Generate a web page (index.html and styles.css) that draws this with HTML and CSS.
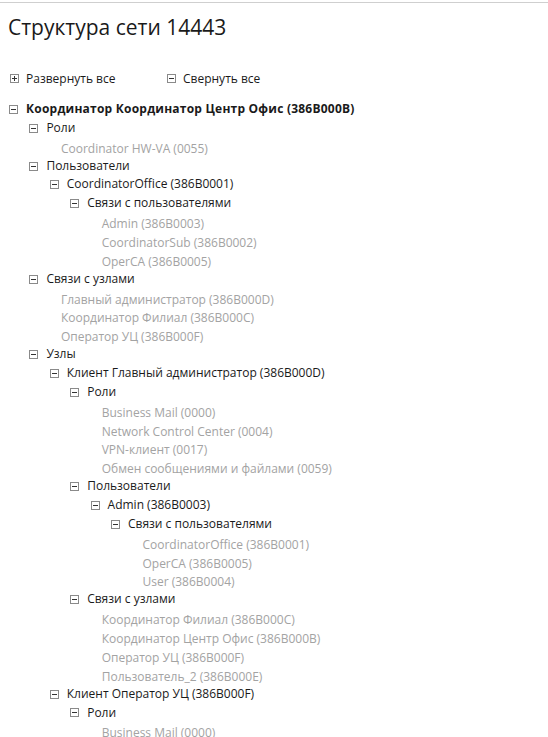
FILE: index.html
```html
<!DOCTYPE html>
<html lang="ru">
<head>
<meta charset="utf-8">
<link rel="stylesheet" href="styles.css">
</head>
<body>
<div class="topline"></div>
<div class="page">
  <h1 class="title">Структура сети 14443</h1>
  <div class="actions">
    <span class="action"><span class="tog plus"></span>Развернуть все</span>
    <span class="action"><span class="tog"></span>Свернуть все</span>
  </div>
  <ul class="tree">
    <li>
      <div class="node bold"><span class="tog"></span>Координатор Координатор Центр Офис (386B000B)</div>
      <ul>
        <li>
          <div class="node"><span class="tog"></span>Роли</div>
          <ul class="leaves">
            <li>Coordinator HW-VA (0055)</li>
          </ul>
        </li>
        <li>
          <div class="node"><span class="tog"></span>Пользователи</div>
          <ul>
            <li>
              <div class="node"><span class="tog"></span>CoordinatorOffice (386B0001)</div>
              <ul>
                <li>
                  <div class="node"><span class="tog"></span>Связи с пользователями</div>
                  <ul class="leaves">
                    <li>Admin (386B0003)</li>
                    <li>CoordinatorSub (386B0002)</li>
                    <li>OperCA (386B0005)</li>
                  </ul>
                </li>
              </ul>
            </li>
          </ul>
        </li>
        <li>
          <div class="node"><span class="tog"></span>Связи с узлами</div>
          <ul class="leaves">
            <li>Главный администратор (386B000D)</li>
            <li>Координатор Филиал (386B000C)</li>
            <li>Оператор УЦ (386B000F)</li>
          </ul>
        </li>
        <li>
          <div class="node"><span class="tog"></span>Узлы</div>
          <ul>
            <li>
              <div class="node"><span class="tog"></span>Клиент Главный администратор (386B000D)</div>
              <ul>
                <li>
                  <div class="node"><span class="tog"></span>Роли</div>
                  <ul class="leaves">
                    <li>Business Mail (0000)</li>
                    <li>Network Control Center (0004)</li>
                    <li>VPN-клиент (0017)</li>
                    <li>Обмен сообщениями и файлами (0059)</li>
                  </ul>
                </li>
                <li>
                  <div class="node"><span class="tog"></span>Пользователи</div>
                  <ul>
                    <li>
                      <div class="node"><span class="tog"></span>Admin (386B0003)</div>
                      <ul>
                        <li>
                          <div class="node"><span class="tog"></span>Связи с пользователями</div>
                          <ul class="leaves">
                            <li>CoordinatorOffice (386B0001)</li>
                            <li>OperCA (386B0005)</li>
                            <li>User (386B0004)</li>
                          </ul>
                        </li>
                      </ul>
                    </li>
                  </ul>
                </li>
                <li>
                  <div class="node"><span class="tog"></span>Связи с узлами</div>
                  <ul class="leaves">
                    <li>Координатор Филиал (386B000C)</li>
                    <li>Координатор Центр Офис (386B000B)</li>
                    <li>Оператор УЦ (386B000F)</li>
                    <li>Пользователь_2 (386B000E)</li>
                  </ul>
                </li>
              </ul>
            </li>
            <li>
              <div class="node"><span class="tog"></span>Клиент Оператор УЦ (386B000F)</div>
              <ul>
                <li>
                  <div class="node"><span class="tog"></span>Роли</div>
                  <ul class="leaves">
                    <li>Business Mail (0000)</li>
                  </ul>
                </li>
              </ul>
            </li>
          </ul>
        </li>
      </ul>
    </li>
  </ul>
</div>
</body>
</html>
```
FILE: styles.css
```css
html, body {
  margin: 0;
  padding: 0;
  background: #fff;
}
body {
  font-family: "Open Sans", "Noto Sans", sans-serif;
  font-size: 12px;
  color: #1a1a1a;
  overflow: hidden;
}
.topline {
  height: 1px;
  margin-top: 2px;
  background: #cfcfcf;
}
.page {
  padding: 0 0 0 8px;
}
.title {
  margin: 10px 0 0 0;
  font-size: 21px;
  font-weight: 400;
  line-height: 28px;
  color: #1a1a1a;
}
.actions {
  display: flex;
  margin-top: 28px;
  height: 19px;
  align-items: center;
}
.action {
  display: flex;
  align-items: center;
  gap: 7px;
  width: 155px;
  padding-left: 2px;
}
.tog {
  box-sizing: border-box;
  width: 9px;
  height: 9px;
  border: 1px solid #8a8a8a;
  position: relative;
  flex: none;
}
.tog::before {
  content: "";
  position: absolute;
  left: 1px;
  right: 1px;
  top: 3px;
  height: 1px;
  background: #333;
}
.tog.plus::after {
  content: "";
  position: absolute;
  top: 1px;
  bottom: 1px;
  left: 3px;
  width: 1px;
  background: #333;
}
.tree {
  margin: 12px 0 0 0;
}
ul {
  list-style: none;
  margin: 0;
  padding: 0;
}
.tree ul {
  padding-left: 20.4px;
}
.node {
  display: flex;
  align-items: center;
  gap: 8px;
  height: 18.87px;
  line-height: 18.87px;
  padding-left: 1px;
  white-space: nowrap;
}
.bold {
  font-weight: 700;
  letter-spacing: 0.22px;
}
.tree ul.leaves {
  padding-left: 32.5px;
  padding-top: 2px;
  margin-bottom: -2px;
  color: #a3a3a3;
}
.leaves li {
  height: 18.87px;
  line-height: 18.87px;
  white-space: nowrap;
}
```
